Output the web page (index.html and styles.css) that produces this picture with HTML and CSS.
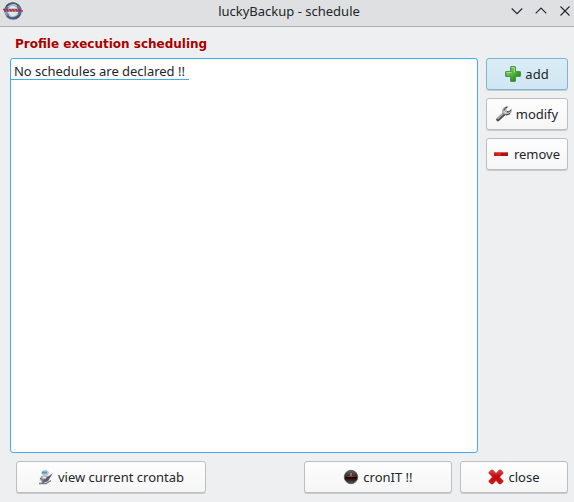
FILE: index.html
```html
<!DOCTYPE html>
<html lang="en">
<head>
<meta charset="utf-8">
<title>luckyBackup - schedule</title>
<link rel="stylesheet" href="styles.css">
</head>
<body>
<header class="titlebar">
  <svg class="logo" width="20" height="20" viewBox="0 0 20 20">
    <defs><linearGradient id="ring" x2="1" y2="1"><stop offset="0" stop-color="#203a6c"/><stop offset=".3" stop-color="#8ba6cc"/><stop offset=".55" stop-color="#60728e"/><stop offset=".8" stop-color="#5078b8"/><stop offset="1" stop-color="#29343f"/></linearGradient></defs>
    <circle cx="10" cy="10" r="7" fill="#e4e6ea" stroke="url(#ring)" stroke-width="3.6"/>
    <path d="M3 5Q10-1 16 5M4 15Q10 20 17 14" fill="none" stroke="#4b5560" stroke-width="1.2"/>
    <path d="M5 6Q10 2 14 5M6 14.5Q10 17 15 13" fill="none" stroke="#c5d6ec"/>
    <path d="M0 8.5h18M1 10h19" stroke="#9a3a46" stroke-width="1.5" stroke-dasharray="2.5 .4"/>
  </svg>
  <h1 class="title">luckyBackup - schedule</h1>
  <div class="controls">
    <svg width="12" height="12" viewBox="0 0 12 12"><path d="M.7 3.5 6 8.7l5.3-5.2"/></svg>
    <svg width="12" height="12" viewBox="0 0 12 12"><path d="M.7 8.3 6 3.1l5.3 5.2"/></svg>
    <svg width="12" height="12" viewBox="0 0 12 12"><path d="m1.5 1.5 9 9m0-9-9 9"/></svg>
  </div>
</header>
<main class="dialog">
  <h2 class="heading">Profile execution scheduling</h2>
  <div class="content">
    <div class="list"><div class="item">No schedules are declared !!</div></div>
    <div class="actions">
      <button class="button active">
        <svg width="16" height="16" viewBox="0 0 16 16"><defs><linearGradient id="green" x2="1" y2="1"><stop offset="0" stop-color="#98d878"/><stop offset=".5" stop-color="#4eb83c"/><stop offset="1" stop-color="#087308"/></linearGradient></defs><path d="M5.7.7h4.6v5h5v4.6h-5v5H5.7v-5h-5V5.7h5z" fill="url(#green)" stroke="#378432"/><path d="M6.5 1.5h3v5M1.5 6.5h5" fill="none" stroke="#a8dc8a"/></svg>
        <span>add</span>
      </button>
      <button class="button">
        <svg width="16" height="16" viewBox="0 0 16 16"><path d="m2 13.5 6-5.5" stroke="#4c4c4c" stroke-width="3.6" stroke-linecap="round"/><path d="m1.5 13 7-6.5" stroke="#b5b5b5" stroke-width="1.3"/><path d="M7 7C5.5 3.500 8 .8 12 .7L9.800 3.500l1 2 2 .3L15.300 3.500c.5 3.500-2.300 6.200-6 5.300z" fill="#b9b9b9" stroke="#858585" stroke-width=".6"/><path d="M8 4.500c.3-2 1.500-3 3-3.300M11 5.800h2l2-2M9.500 8.700c2 .3 3.500-.4 4.500-1.500" fill="none" stroke="#3c3c3c"/><path d="m8.300 5.500 1.500 1.800" stroke="#eee"/></svg>
        <span>modify</span>
      </button>
      <button class="button">
        <svg class="minus" width="16" height="16" viewBox="0 0 16 16"><path d="M1 6h14v4H1z" fill="#c5201b"/><path d="M1 6.500h14" stroke="#df5751"/><path d="M8 7h7v3H8z" fill="#a61412"/><path d="M4 8h4" stroke="#e52c24"/></svg>
        <span>remove</span>
      </button>
    </div>
  </div>
  <footer class="footer">
    <button class="button crontab">
      <svg width="16" height="16" viewBox="0 0 16 16"><path d="M3 4Q4 1 7 1q4 0 4 4L9 7H5z" fill="#c0c5ca"/><path d="M4 2.600h5v2H4z" fill="#4a9bd0"/><path d="M3 7h8l-1 5-5 2-3-3z" fill="#a5a9b2"/><path d="m3 14.500 3-4L15 4l-5 8z" fill="#585969"/><path d="m2 9 4 3M1 14.500h7l5-3" fill="none" stroke="#777985" stroke-width="1.300"/><path d="m5 8 3 1" stroke="#eee" stroke-width="1.500"/></svg>
      <span>view current crontab</span>
    </button>
    <button class="button cronit">
      <svg width="16" height="16" viewBox="0 0 16 16"><defs><linearGradient id="dial" x2="0" y2="1"><stop offset="0" stop-color="#666"/><stop offset=".45" stop-color="#302a2b"/><stop offset=".55" stop-color="#090707"/><stop offset="1" stop-color="#655456"/></linearGradient></defs><circle cx="8" cy="8" r="6.700" fill="url(#dial)" stroke="#625b5c"/><path d="M8 4v4" stroke="#aaa"/><path d="M3.500 7.500H8l4.500-.5" fill="none" stroke="#c0201f" stroke-width="1.200"/></svg>
      <span>cronIT !!</span>
    </button>
    <button class="button close">
      <svg width="16" height="16" viewBox="0 0 16 16"><defs><linearGradient id="red" x2="0" y2="1"><stop offset="0" stop-color="#df4b48"/><stop offset=".45" stop-color="#c50808"/><stop offset="1" stop-color="#d71715"/></linearGradient></defs><path d="M1 3.300 3.300 1h1.400L8 4.500 11.300 1h1.400L15 3.300v1L11.500 8l3.500 3.700v1L12.700 15h-1.400L8 11.500 4.700 15H3.300L1 12.700v-1L4.500 8 1 4.300z" fill="url(#red)" stroke="#a82020" stroke-width=".7"/></svg>
      <span>close</span>
    </button>
  </footer>
</main>
</body>
</html>
```
FILE: styles.css
```css
* { box-sizing: border-box; }
body {
  margin: 0;
  height: 502px;
  display: flex;
  flex-direction: column;
  overflow: hidden;
  background: #eeeff1;
  color: #232629;
  font: 13px "Noto Sans", sans-serif;
}
.titlebar {
  height: 27px;
  display: grid;
  grid-template-columns: 78px 1fr 78px;
  background: #dee0e2;
  border-bottom: 1px solid #afb0b2;
}
.logo { margin: 1px 0 0 3px; }
.title {
  margin: 0;
  padding: 2px 0 0 4px;
  font-size: 13px;
  font-weight: 400;
  line-height: 19px;
  text-align: center;
}
.controls {
  display: flex;
  gap: 12px;
  padding: 5px 0 0 15px;
}
.controls svg { flex: none; }
.controls path { fill: none; stroke: #232629; stroke-width: 1.1; }
.dialog {
  flex: 1;
  display: flex;
  flex-direction: column;
  padding: 8px 6px 0 10px;
}
.heading {
  margin: 0 0 5px 5px;
  height: 18px;
  color: #aa0000;
  font: bold 12px/18px "DejaVu Sans", sans-serif;
}
.content { display: flex; gap: 8px; height: 395px; }
.list {
  width: 468px;
  background: #fff;
  border: 1px solid #3daee9;
  border-radius: 3px;
}
.item {
  width: 178px;
  height: 21px;
  padding-left: 3px;
  border-bottom: 1px solid #3daee9;
  line-height: 25px;
  letter-spacing: -0.02px;
}
.actions { width: 82px; display: flex; flex-direction: column; gap: 8px; }
.button {
  display: flex;
  align-items: center;
  justify-content: center;
  gap: 4px;
  height: 32px;
  padding: 0;
  color: inherit;
  font: inherit;
  line-height: 18px;
  white-space: nowrap;
  background: linear-gradient(#fdfdfd, #f6f6f7);
  border: 1px solid #bcbebf;
  border-radius: 3px;
  box-shadow: 0 1px 0 #c9cacc;
}
.button svg { flex: none; }
.button .minus { margin-left: -1px; margin-right: 1px; }
.active {
  background: linear-gradient(#daedf7, #d0e6f2);
  border-color: #7bb6d3;
}
.footer { display: flex; padding: 8px 0 0 6px; }
.crontab { width: 190px; }
.cronit { width: 148px; margin-left: 98px; }
.close { width: 108px; margin-left: 8px; }
```
